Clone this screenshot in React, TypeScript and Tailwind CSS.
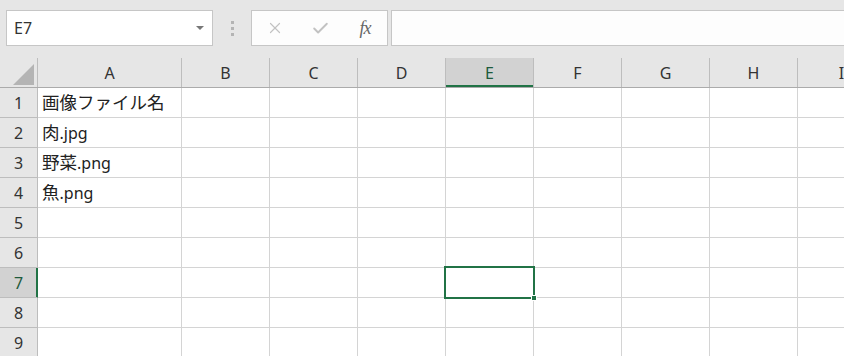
import { X, Check } from "lucide-react"

const cols = ["A", "B", "C", "D", "E", "F", "G", "H", "I"]
const rows = [1, 2, 3, 4, 5, 6, 7, 8, 9]

// cell A values split into [japanese, latin]
const data: Record<number, [string, string]> = {
  1: ["画像ファイル名", ""],
  2: ["肉", ".jpg"],
  3: ["野菜", ".png"],
  4: ["魚", ".png"],
}

const colWidth = (c: string) => (c === "A" ? "w-[144px]" : "w-[88px]")

export default function App() {
  return (
    <div className="w-[844px] h-[356px] overflow-hidden bg-white font-['Noto_Sans','Noto_Sans_CJK_JP',sans-serif]">
      {/* Toolbar: name box + formula bar */}
      <div className="h-[58px] bg-[#e6e6e6] flex items-start pt-[10px] pl-[6px]">
        <div className="w-[207px] h-[36px] bg-white border border-[#c6c6c6] flex items-center pl-[7px] pr-[8px]">
          <span className="text-[16px] text-[#333] flex-1">E7</span>
          <div className="w-0 h-0 border-l-[4px] border-r-[4px] border-t-[4px] border-l-transparent border-r-transparent border-t-[#777]" />
        </div>
        <div className="w-[38px] h-[36px] flex flex-col items-center justify-center gap-[3px]">
          <div className="w-[3px] h-[3px] bg-[#b4b4b4]" />
          <div className="w-[3px] h-[3px] bg-[#b4b4b4]" />
          <div className="w-[3px] h-[3px] bg-[#b4b4b4]" />
        </div>
        <div className="w-[137px] h-[36px] bg-[#fdfdfd] border border-[#c6c6c6] flex items-center">
          <div className="w-[44px] flex justify-center ml-[1px]">
            <X size={18} strokeWidth={1.6} className="text-[#c2c2c2]" />
          </div>
          <div className="w-[46px] flex justify-center">
            <Check size={19} strokeWidth={2.4} className="text-[#c2c2c2]" />
          </div>
          <div className="w-[44px] flex justify-center">
            <span className="font-['Liberation_Serif',serif] italic text-[18px] text-[#666] tracking-[-1px]">fx</span>
          </div>
        </div>
        <div className="ml-[3px] flex-1 h-[36px] bg-[#fdfdfd] border border-[#c6c6c6] border-r-0" />
      </div>

      {/* Grid */}
      <div className="relative">
        {/* Column header row */}
        <div className="flex h-[30px] bg-[#e6e6e6] border-b border-[#ababab]">
          <div className="w-[38px] shrink-0 border-r border-[#bdbdbd] flex items-end justify-end pr-[3px] pb-[2px]">
            <svg width="21" height="21" viewBox="0 0 21 21">
              <polygon points="21,0 21,21 0,21" fill="#b4b4b4" />
            </svg>
          </div>
          {cols.map((c) => (
            <div
              key={c}
              className={`${colWidth(c)} shrink-0 border-r border-[#bdbdbd] flex items-center justify-center text-[16px] ${
                c === "E" ? "bg-[#d2d2d2] text-[#1e5a3c] shadow-[inset_0_-2px_0_#217346]" : "text-[#333]"
              }`}
            >
              {c}
            </div>
          ))}
        </div>

        {rows.map((r) => (
          <div key={r} className="flex h-[30px]">
            <div
              className={`w-[38px] shrink-0 border-b border-r flex items-center justify-center text-[16px] ${
                r === 7
                  ? "bg-[#d2d2d2] text-[#1e5a3c] border-b-[#bdbdbd] border-r-[#217346] shadow-[inset_-1px_0_0_#217346]"
                  : "bg-[#e6e6e6] text-[#333] border-[#bdbdbd]"
              }`}
            >
              {r}
            </div>
            {cols.map((c) => (
              <div
                key={c}
                className={`${colWidth(c)} shrink-0 border-b border-r border-[#d4d4d4] flex items-center pl-[4px] text-[16px] text-[#222] whitespace-nowrap`}
              >
                {c === "A" && data[r] ? (
                  <>
                    <span className="text-[17.5px] font-['Noto_Sans_CJK_JP',sans-serif]">{data[r][0]}</span>
                    <span>{data[r][1]}</span>
                  </>
                ) : null}
              </div>
            ))}
          </div>
        ))}

        {/* Active cell E7 */}
        <div className="absolute left-[444px] top-[208px] w-[91px] h-[33px] border-2 border-[#217346] pointer-events-none">
          <div className="absolute -right-[4px] -bottom-[4px] w-[6px] h-[6px] bg-[#217346] border border-white" />
        </div>
      </div>
    </div>
  )
}
